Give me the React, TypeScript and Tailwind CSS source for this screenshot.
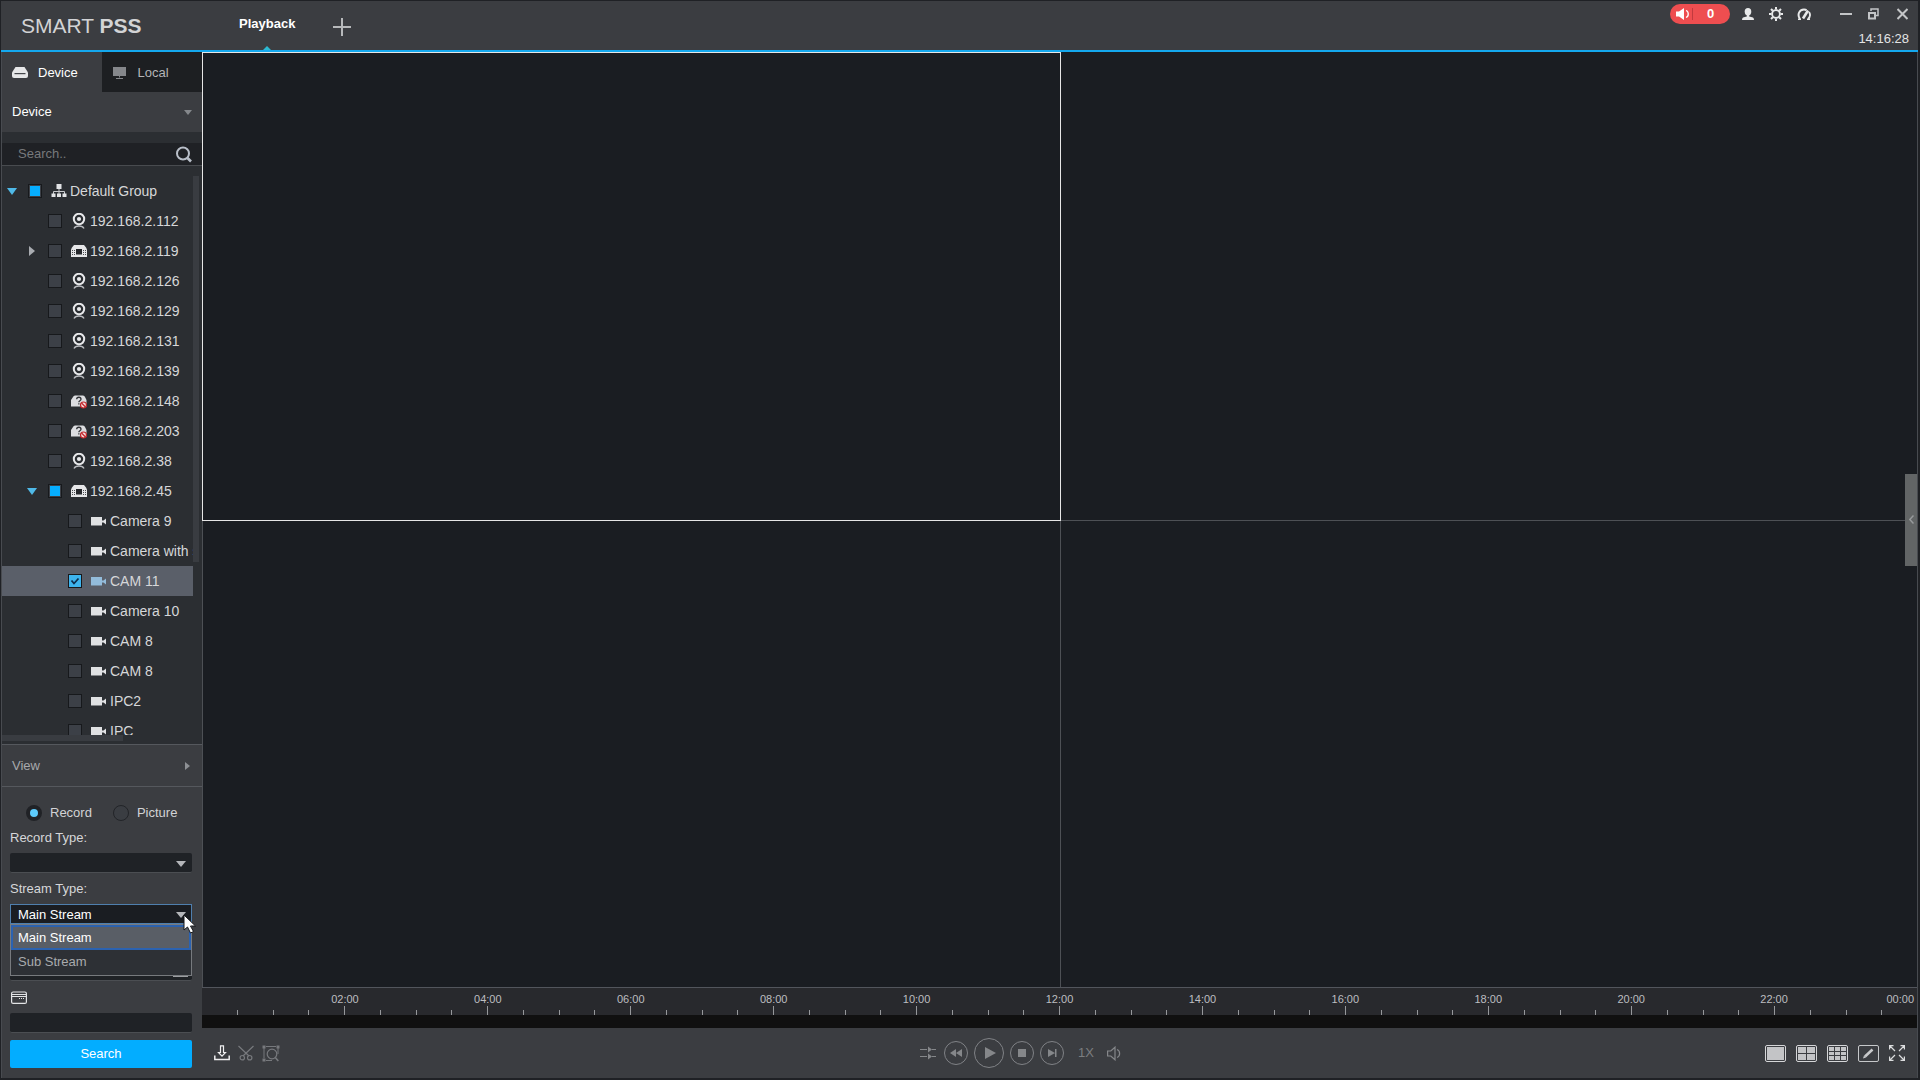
import React from "react";

type IconKind = "group" | "webcam" | "nvr" | "unknown" | "cam";
type CheckState = "off" | "partial" | "on";

interface TreeItem {
  label: string;
  level: 0 | 1 | 2;
  icon: IconKind;
  state?: CheckState;
  arrow?: "open" | "closed";
}

const tree: TreeItem[] = [
  { label: "Default Group", level: 0, icon: "group", state: "partial", arrow: "open" },
  { label: "192.168.2.112", level: 1, icon: "webcam" },
  { label: "192.168.2.119", level: 1, icon: "nvr", arrow: "closed" },
  { label: "192.168.2.126", level: 1, icon: "webcam" },
  { label: "192.168.2.129", level: 1, icon: "webcam" },
  { label: "192.168.2.131", level: 1, icon: "webcam" },
  { label: "192.168.2.139", level: 1, icon: "webcam" },
  { label: "192.168.2.148", level: 1, icon: "unknown" },
  { label: "192.168.2.203", level: 1, icon: "unknown" },
  { label: "192.168.2.38", level: 1, icon: "webcam" },
  { label: "192.168.2.45", level: 1, icon: "nvr", state: "partial", arrow: "open" },
  { label: "Camera 9", level: 2, icon: "cam" },
  { label: "Camera with s", level: 2, icon: "cam" },
  { label: "CAM 11", level: 2, icon: "cam", state: "on" },
  { label: "Camera 10", level: 2, icon: "cam" },
  { label: "CAM 8", level: 2, icon: "cam" },
  { label: "CAM 8", level: 2, icon: "cam" },
  { label: "IPC2", level: 2, icon: "cam" },
  { label: "IPC", level: 2, icon: "cam" },
];

const indents = ["pl-1", "pl-6", "pl-11"];

function TreeIcon({ kind, selected }: { kind: IconKind; selected: boolean }) {
  const common = { width: 16, height: 16, viewBox: "0 0 16 16", className: "shrink-0", "aria-hidden": true } as const;
  switch (kind) {
    case "group":
      return (
        <svg {...common} fill="#e2e3e5">
          <path d="M5.500 1h5v5h-5z" />
          <path d="M8 6v5M2.500 11V8.500h11V11" fill="none" stroke="#c8cacd" />
          <path d="M.5 10.500h4V14h-4zM6 10.500h4V14H6zM11.500 10.500h4V14h-4z" />
        </svg>
      );
    case "webcam":
      return (
        <svg {...common} fill="none">
          <circle cx="8" cy="6" r="5.200" stroke="#e8e9eb" strokeWidth="2" />
          <circle cx="8" cy="6" r="2.100" fill="#e8e9eb" />
          <path d="M3 15.500c1-2 3-2.500 5-2.500s4 .5 5 2.500" stroke="#b9bbbf" strokeWidth="1.300" />
        </svg>
      );
    case "nvr":
      return (
        <svg {...common}>
          <path d="M3 2h10l2 2.500 1 2V14H0V6.500l1-2z" fill="#e6e7e9" />
          <path d="M5 6h6v5.500H5z" fill="#26282c" />
          <path d="M1 7h1v1H1zM3 7h1v1H3zM1 9h1v1H1zM3 9h1v1H3zM1 11h1v1H1zM3 11h1v1H3zM12 7h1v1h-1zM14 7h1v1h-1zM12 9h1v1h-1zM14 9h1v1h-1zM12 11h1v1h-1zM14 11h1v1h-1z" fill="#4a4c50" />
        </svg>
      );
    case "unknown":
      return (
        <svg {...common}>
          <path d="M4 2.500h8q1.500 0 2 1.500l1.500 3v6.500H0V7l2-3q.5-1.500 2-1.500z" fill="#dcdde0" />
          <path d="M5.700 6.200c0-2.600 4.300-2.600 4.300 0 0 1.500-2.200 1.500-2.200 3" fill="none" stroke="#303236" strokeWidth="1.300" />
          <path d="M7.200 10.300h1.300v1.300H7.200z" fill="#303236" />
          <circle cx="12.500" cy="12" r="3" fill="#f3dcdc" stroke="#c4262b" strokeWidth="1.200" />
          <path d="m10.500 10 4 4" stroke="#c4262b" strokeWidth="1.300" />
        </svg>
      );
    case "cam":
      return (
        <svg {...common} fill={selected ? "#93bcdb" : "#e0e1e3"}>
          <path d="M0 4h11v8.500H0z" />
          <path d="M11 7.500h1.500L15 5.500v6l-2.500-2H11z" />
        </svg>
      );
  }
}

function TreeBox({ state, label }: { state: CheckState; label: string }) {
  return (
    <span className="relative ml-2.5 grid size-3.5 shrink-0 place-items-center">
      <input
        type="checkbox"
        aria-label={label}
        defaultChecked={state === "on"}
        className="size-3.5 appearance-none border border-[#17191c] bg-[#3c4047] checked:bg-[#3db4ee]"
      />
      {state === "partial" && <span className="pointer-events-none absolute size-2.5 bg-[#06aeff]" />}
      {state === "on" && (
        <svg className="pointer-events-none absolute" width="10" height="10" viewBox="0 0 10 10" fill="none" stroke="#0e2d4c" strokeWidth="1.800">
          <path d="m1.500 4.500 2.500 3 4.500-5" />
        </svg>
      )}
    </span>
  );
}

function TreeRow({ item }: { item: TreeItem }) {
  const state = item.state ?? "off";
  const on = state === "on";
  return (
    <li className={`flex h-[30px] shrink-0 items-center overflow-hidden ${indents[item.level]} ${on ? "bg-[#5a5f69]" : ""}`}>
      <span className="grid w-3 shrink-0 place-items-center">
        {item.arrow === "open" && (
          <svg width="10" height="7" viewBox="0 0 10 7" fill="#4fb9e8"><path d="M0 0h10L5 7z" /></svg>
        )}
        {item.arrow === "closed" && (
          <svg width="7" height="10" viewBox="0 0 7 10" fill="#a9acb1"><path d="M0 0v10l6-5z" /></svg>
        )}
      </span>
      <TreeBox state={state} label={item.label} />
      <span className="ml-[9px] flex items-center gap-[3px] whitespace-nowrap text-sm text-[#d6d7d9]">
        <TreeIcon kind={item.icon} selected={on} />
        {item.label}
      </span>
    </li>
  );
}

function DownArrow() {
  return (
    <svg className="pointer-events-none absolute top-2 right-1.5" width="10" height="6" viewBox="0 0 10 6" fill="#b4b6ba" aria-hidden>
      <path d="M0 0h10L5 6z" />
    </svg>
  );
}

function Sidebar() {
  return (
    <aside className="flex w-[200px] shrink-0 flex-col bg-[#3b3d41] text-[13px]">
      <div className="flex h-10 shrink-0">
        <button className="flex flex-1 items-center gap-2.5 pt-px pl-2.5 text-white">
          <svg width="16" height="11" viewBox="0 0 16 11" aria-hidden>
            <path d="M3.500 0h9L16 5.500V9q0 2-2 2H2q-2 0-2-2V5.500z" fill="#e6e7e8" />
            <path d="M2.500 6h11v1.200h-11z" fill="#44464a" />
          </svg>
          Device
        </button>
        <button className="flex flex-1 items-center gap-3 bg-[#1d1f22] pt-px pl-[11px] text-[#b4b5b7]">
          <svg width="13" height="12" viewBox="0 0 13 12" fill="#85878b" aria-hidden>
            <path d="M0 0h13v9H0zM6 9h1v1.500H6zM3 11h7v1H3z" />
          </svg>
          Local
        </button>
      </div>
      <button className="flex h-10 shrink-0 items-center justify-between pr-2.5 pl-2.5 text-white">
        Device
        <svg width="8" height="5" viewBox="0 0 8 5" fill="#85888c" aria-hidden><path d="M0 0h8L4 5z" /></svg>
      </button>

      <div className="flex min-h-0 flex-1 flex-col border-b border-[#55585d] bg-[#2b2e32] pt-[11px]">
        <label className="flex h-[23px] shrink-0 items-center border-b border-[#484b4f] bg-[#1f2125] pr-2.5 pl-4">
          <input type="text" aria-label="Search devices" placeholder="Search.." className="min-w-0 flex-1 bg-transparent text-[#c8c9cb] outline-none placeholder:text-[#77797c]" />
          <svg width="16" height="17" viewBox="0 0 16 17" fill="none" stroke="#b9bfc9" aria-hidden>
            <circle cx="7" cy="7.500" r="6" strokeWidth="2" />
            <path d="m11.500 12 3.500 3.500" strokeWidth="2.600" />
          </svg>
        </label>
        <div className="mt-2.5 flex min-h-0 flex-1 pr-[3px]">
          <ul className="min-w-0 flex-1 overflow-hidden">
            {tree.map((item, i) => <TreeRow key={i} item={item} />)}
          </ul>
          <div className="h-[386px] w-1.5 bg-[#393c41]" />
        </div>
        <div className="mb-[3px] h-1.5 w-[121px] shrink-0 bg-[#393c41]" />
      </div>

      <button className="flex h-[42px] shrink-0 items-center justify-between border-b border-[#55585d] pr-3 pl-2.5 text-[#a7a9ac]">
        View
        <svg width="5" height="8" viewBox="0 0 5 8" fill="#8d9094" aria-hidden><path d="M0 0v8l5-4z" /></svg>
      </button>

      <form className="flex shrink-0 flex-col pr-2.5 pb-2.5 pl-2" onSubmit={(e) => e.preventDefault()}>
        <div className="mt-[18px] flex h-4 items-center pl-4 text-[#d2d3d5]">
          <label className="flex items-center gap-2">
            <input type="radio" name="kind" defaultChecked className="size-4 appearance-none rounded-full border-4 border-[#202226] bg-[#5dcbfb]" />
            Record
          </label>
          <label className="ml-[21px] flex items-center gap-2">
            <input type="radio" name="kind" className="size-4 appearance-none rounded-full border border-[#222428] bg-[#3a3d42]" />
            Picture
          </label>
        </div>
        <label htmlFor="record-type" className="mt-[9px] h-4 leading-4 text-[#d6d7d9]">Record Type:</label>
        <div className="relative mt-[7px]">
          <select id="record-type" className="block h-5 w-full appearance-none rounded-xs border-b border-[#4b4e52] bg-[#1f2226] px-2 text-[#dddddd]">
            <option value=""></option>
          </select>
          <DownArrow />
        </div>
        <label htmlFor="stream-type" className="mt-2 h-4 leading-4 text-[#d6d7d9]">Stream Type:</label>
        <div className="relative mt-[7px]">
          <select id="stream-type" className="block h-5 w-full appearance-none border border-[#4f7fae] bg-[#1a1d22] px-[7px] text-white">
            <option>Main Stream</option>
            <option>Sub Stream</option>
          </select>
          <DownArrow />
          <ul role="listbox" aria-label="Stream Type" className="absolute top-5 z-10 w-full border border-[#777a7e] bg-[#2d3035]">
            <li role="option" aria-selected="true" className="h-[25px] border-2 border-[#2b62b0] bg-[#595e66] pl-[5px] leading-[22px] text-white">Main Stream</li>
            <li role="option" aria-selected="false" className="h-[25px] pl-[7px] leading-6 text-[#a9abae]">Sub Stream</li>
          </ul>
          <svg className="pointer-events-none absolute top-2.5 left-[173px] z-20" width="14" height="22" viewBox="0 0 14 22" aria-hidden>
            <path d="M1 1v15l3.500-3 3 6 3-1.500-3-5.500h5z" fill="#fff" stroke="#15171a" strokeWidth="1" />
          </svg>
        </div>
        <div className="relative mt-[37px]">
          <input type="text" aria-label="Date" className="block h-5 w-full rounded-xs border-b border-[#4b4e52] bg-[#1f2226] px-2 text-[#dddddd]" />
          <svg className="pointer-events-none absolute top-1 right-1" width="15" height="12" viewBox="0 0 15 12" fill="none" stroke="#c6c8cb" strokeWidth="1.500" aria-hidden>
            <path d="M.5 1h14v10H.5zM.5 4h14" />
          </svg>
        </div>
        <svg className="mt-2.5 ml-px" width="16" height="13" viewBox="0 0 16 13" fill="none" stroke="#e3e4e6" aria-hidden>
          <rect x=".6" y="1" width="14.800" height="11.400" rx="1.500" strokeWidth="1.200" />
          <path d="M.5 3.500h15M.5 5.500h15" />
          <path d="M8 7.500h1M10 7.500h1M12 7.500h1" />
        </svg>
        <input type="text" aria-label="Time" className="mt-[9px] block h-5 w-full rounded-xs border-b border-[#4b4e52] bg-[#1f2226] px-2 text-[#dddddd]" />
        <button className="mt-[7px] h-7 rounded-xs bg-[#03adff] text-white">Search</button>
      </form>
    </aside>
  );
}

function Header() {
  return (
    <header className="flex h-[51px] shrink-0 justify-between border-b-2 border-[#14a8ee] bg-[#3b3d41]">
      <div className="flex">
        <h1 className="w-[200px] pl-5 text-[21px] leading-[50px] text-[#d2d3d5]">SMART <b>PSS</b></h1>
        <button className="relative px-[38px] pb-1 text-[13px] font-bold text-white">
          Playback
          <svg className="absolute bottom-0 left-1/2 -translate-x-1/2" width="8" height="4" viewBox="0 0 8 4" fill="#2cb9d2" aria-hidden><path d="M4 0 8 4H0z" /></svg>
        </button>
        <button aria-label="New tab" className="pt-0.5">
          <svg width="18" height="18" viewBox="0 0 18 18" stroke="#b7b9bb" strokeWidth="2" aria-hidden><path d="M9 0v18M0 9h18" /></svg>
        </button>
      </div>
      <div className="flex flex-col items-end pt-[3px]">
        <div className="flex h-5 items-center pr-2.5">
          <button className="flex h-5 w-[60px] items-center rounded-full bg-[#ee4e50] pl-1.5 text-[13px] font-bold text-white">
            <svg width="14" height="12" viewBox="0 0 14 12" aria-hidden>
              <path d="M0 3.500h3L8 0v12L3 8.500H0z" fill="#fff" />
              <path d="M10 2.500c3 1 3 6 0 7" fill="none" stroke="#fff" strokeWidth="1.300" />
            </svg>
            <span className="ml-0.5 h-3 w-px bg-[#c23a3e]" />
            <span className="flex-1 pr-0.5 text-center">0</span>
          </button>
          <button aria-label="User" className="ml-3">
            <svg width="12" height="12" viewBox="0 0 12 12" fill="#e8e9ea" aria-hidden>
              <ellipse cx="6" cy="3.700" rx="3.300" ry="3.700" /><path d="M4.800 6h2.400v2.500L11 9.500q1 .5 1 2.500H0q0-2 1-2.500l3.800-1z" />
            </svg>
          </button>
          <button aria-label="Settings" className="ml-[15px]">
            <svg width="14" height="14" viewBox="0 0 14 14" fill="none" stroke="#e8e9ea" aria-hidden>
              <circle cx="7" cy="7" r="3.900" strokeWidth="1.900" />
              <path d="M7 0v2.500M7 11.500V14M0 7h2.500M11.500 7H14M2 2l1.800 1.800M10.200 10.200 12 12M12 2l-1.800 1.800M3.800 10.200 2 12" strokeWidth="2" />
            </svg>
          </button>
          <button aria-label="System load" className="ml-3.5">
            <svg width="14" height="12" viewBox="0 0 14 12" fill="none" stroke="#e8e9ea" aria-hidden>
              <path d="M3 11C0 7 2 1.500 7 1.500c1 0 2 .2 2.500.6M12 4c1.500 2 1.200 5-.8 7" strokeWidth="2" />
              <path d="m6 10.500 5-8" strokeWidth="2.600" />
              <path d="M1 11.200h3M10 11.200h3" strokeWidth="1.400" />
            </svg>
          </button>
          <button aria-label="Minimize" className="ml-[29px]">
            <svg width="12" height="12" viewBox="0 0 12 12" fill="#c3c5c7" aria-hidden><path d="M0 5h12v2H0z" /></svg>
          </button>
          <button aria-label="Restore" className="ml-4">
            <svg width="11" height="12" viewBox="0 0 11 12" fill="none" stroke="#c3c5c7" aria-hidden>
              <path d="M3 3V1h7v6.500H8" strokeWidth="1.500" /><path d="M1 5h6v5.500H1z" strokeWidth="2" />
            </svg>
          </button>
          <button aria-label="Close" className="ml-[18px]">
            <svg width="11" height="12" viewBox="0 0 11 12" stroke="#c3c5c7" strokeWidth="2" aria-hidden><path d="m.5 1 10 10M10.500 1l-10 10" /></svg>
          </button>
        </div>
        <time className="mt-[7px] pr-[9px] text-[13px] leading-4 text-[#e3e4e5]">14:16:28</time>
      </div>
    </header>
  );
}

const hours = ["02:00", "04:00", "06:00", "08:00", "10:00", "12:00", "14:00", "16:00", "18:00", "20:00", "22:00"];

function Timeline() {
  return (
    <div className="flex h-[41px] shrink-0 flex-col border-t border-[#52555c] bg-[#28292d]">
      <div className="grid h-[18px] grid-cols-24 pt-[3px] text-center text-[11px] leading-4 text-[#bdbec0]">
        <span />
        {hours.map((h) => <span key={h} className="col-span-2">{h}</span>)}
        <span className="pr-[3px] text-right">00:00</span>
      </div>
      <div className="flex h-[9px] items-end">
        {Array.from({ length: 48 }, (_, i) => (
          <span
            key={i}
            className={`flex-1 ${i === 47 ? "" : "border-r border-[#96989b]"} ${i % 4 === 3 ? "h-[9px]" : "h-[5px]"}`}
          />
        ))}
      </div>
      <div className="flex-1 bg-[#101010]" />
    </div>
  );
}

function RoundButton({ label, big, children }: { label: string; big?: boolean; children: React.ReactNode }) {
  return (
    <button
      aria-label={label}
      className={`grid place-items-center rounded-full border border-[#808286] text-[#85878a] ${big ? "size-[30px]" : "size-6"}`}
    >
      {children}
    </button>
  );
}

function LayoutIcon({ n }: { n: 1 | 2 | 3 }) {
  return (
    <svg width="21" height="17" viewBox="0 0 21 17" fill="none" aria-hidden>
      <rect x=".5" y=".5" width="20" height="16" rx="1.500" stroke="#d5d6d8" />
      <path d="M2 2h17v13H2z" fill="#c3c4c6" />
      {n === 2 && <path d="M10.500 2v13M2 8.500h17" stroke="#3b3d41" />}
      {n === 3 && <path d="M7.500 2v13M13.500 2v13M2 6.500h17M2 10.500h17" stroke="#3b3d41" />}
    </svg>
  );
}

function Controls() {
  return (
    <div className="flex h-[50px] shrink-0 items-center bg-[#3b3d41]">
      <div className="flex flex-1 items-center gap-2 pl-3">
        <button aria-label="Download">
          <svg width="16" height="16" viewBox="0 0 16 16" fill="none" stroke="#eeeeef" aria-hidden>
            <path d="M6.500.8h3v6.700h2L8 11.200 4.500 7.500h2z" strokeWidth="1.200" />
            <path d="M.8 10.500v4h14.400v-4" strokeWidth="1.500" />
          </svg>
        </button>
        <button aria-label="Cut">
          <svg width="16" height="16" viewBox="0 0 16 16" fill="none" stroke="#77797d" strokeWidth="1.200" aria-hidden>
            <path d="m.5 1 10.500 10M15.500 1 5 11" /><circle cx="4.300" cy="12.700" r="2.200" /><circle cx="11.700" cy="12.700" r="2.200" />
          </svg>
        </button>
        <button aria-label="Smart search">
          <svg width="18" height="17" viewBox="0 0 18 17" fill="none" stroke="#77797d" aria-hidden>
            <path d="M2 13V3M4 1.500h10M16 3v6M4 15.500h6" />
            <path d="M.5.5h3v3h-3zM14.500.5h3v3h-3zM.5 13.500h3v3h-3z" fill="#77797d" stroke="none" />
            <circle cx="10" cy="9" r="4.800" strokeWidth="1.200" />
            <path d="m13.300 12.500 3 3.500" strokeWidth="1.600" />
          </svg>
        </button>
      </div>
      <div className="flex items-center pr-[78px]">
        <button aria-label="Sync playback">
          <svg width="16" height="14" viewBox="0 0 16 14" aria-hidden>
            <path d="M0 3.500h7M12 3.500h4M0 10.500h7M12 10.500h4" stroke="#85878a" />
            <path d="M8 0.500v6l4-3zM8 7.500v6l4-3z" fill="#85878a" />
          </svg>
        </button>
        <div className="ml-2 flex items-center gap-1.5">
          <RoundButton label="Rewind">
            <svg width="12" height="8" viewBox="0 0 12 8" fill="currentColor"><path d="M6 0v8L0 4zM12 0v8L6 4z" /></svg>
          </RoundButton>
          <RoundButton label="Play" big>
            <svg className="ml-0.5" width="11" height="12" viewBox="0 0 11 12" fill="currentColor"><path d="M0 0v12l11-6z" /></svg>
          </RoundButton>
          <RoundButton label="Stop">
            <svg width="8" height="8" viewBox="0 0 8 8" fill="currentColor"><path d="M0 0h8v8H0z" /></svg>
          </RoundButton>
          <RoundButton label="Next frame">
            <svg width="9" height="8" viewBox="0 0 9 8" fill="currentColor"><path d="M0 0v8l7-4zM7 0h1.500v8H7z" /></svg>
          </RoundButton>
        </div>
        <button className="ml-3.5 w-4 text-[13px] text-[#7b7d80]">1X</button>
        <button aria-label="Volume" className="ml-[13px]">
          <svg width="14" height="15" viewBox="0 0 14 15" fill="none" stroke="#85878a" strokeWidth="1.200" aria-hidden>
            <path d="M.6 5h3.200L8 1.200v12.600L3.800 10H.6z" />
            <path d="M10 3.500c3.500 1.500 3.500 6.500 0 8" />
          </svg>
        </button>
      </div>
      <div className="flex flex-1 items-center justify-end gap-2.5 pr-3">
        <button aria-label="Single view"><LayoutIcon n={1} /></button>
        <button aria-label="Four views"><LayoutIcon n={2} /></button>
        <button aria-label="Nine views"><LayoutIcon n={3} /></button>
        <button aria-label="Custom layout">
          <svg width="21" height="17" viewBox="0 0 21 17" fill="none" aria-hidden>
            <rect x=".5" y=".5" width="20" height="16" rx="1.500" stroke="#c6c8ca" />
            <path d="m7 11.500 7.500-7" stroke="#c9cacc" strokeWidth="2.600" /><path d="M5 13.500 6 10.500l2 2z" fill="#c9cacc" />
          </svg>
        </button>
        <button aria-label="Full screen">
          <svg width="16" height="16" viewBox="0 0 16 16" fill="none" stroke="#dcddde" strokeWidth="1.200" aria-hidden>
            <path d="M.6 4.500V.6H4.500M11.500.6h3.900v3.900M15.400 11.500v3.900h-3.900M4.500 15.400H.6v-3.900M1 1l5 5M15 1l-5 5M15 15l-5-5M1 15l5-5" />
          </svg>
        </button>
      </div>
    </div>
  );
}

export default function App() {
  return (
    <div className="flex h-screen flex-col overflow-hidden border border-b-2 border-r-2 border-[#1f2125] bg-[#3b3d41] font-['Liberation_Sans',Arial,sans-serif] leading-normal">
      <Header />
      <div className="flex min-h-0 flex-1 border-x border-[#484b50]">
        <Sidebar />
        <main className="flex min-w-0 flex-1 flex-col">
          <div className="relative grid min-h-0 flex-1 grid-cols-2 grid-rows-2 bg-[#1a1d22]">
            <div className="relative z-10 -mr-px -mb-px border border-[#e6e6e6]" />
            <div className="border-l border-[#4d5055]" />
            <div className="border-t border-l border-[#4d5055]" />
            <div className="border-t border-l border-[#4d5055]" />
            <button aria-label="Expand panel" className="absolute top-1/2 right-0 z-10 grid h-[92px] w-3 -translate-y-1/2 place-items-center bg-[#626566]">
              <svg width="5" height="9" viewBox="0 0 5 9" fill="none" stroke="#979a9c" strokeWidth="1.500" aria-hidden><path d="M4.500.5.800 4.500l3.700 4" /></svg>
            </button>
          </div>
          <Timeline />
          <Controls />
        </main>
      </div>
    </div>
  );
}
